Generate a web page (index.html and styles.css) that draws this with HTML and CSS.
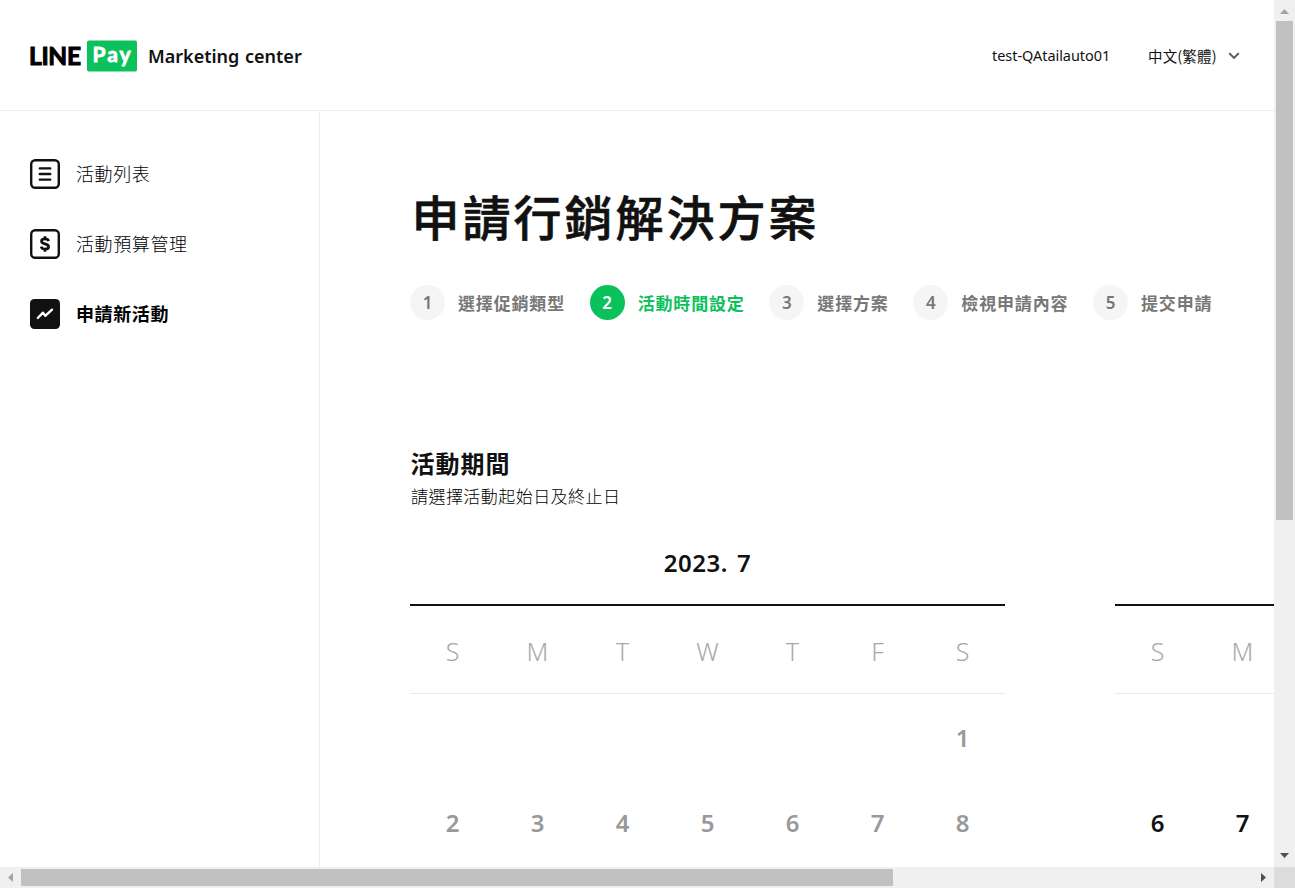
FILE: index.html
```html
<!DOCTYPE html>
<html lang="zh-Hant">
<head>
<meta charset="utf-8">
<title>LINE Pay Marketing center</title>
<link rel="stylesheet" href="styles.css">
</head>
<body>
<div class="window">
  <div class="viewport">
    <header class="header">
      <a class="brand">
        <svg class="logo" width="108" height="32" viewBox="0 0 108 32">
          <rect x="58" y="0.500" width="50" height="31" rx="2" fill="#0bc15c"/>
          <text class="logo-line" x="0" y="25" textLength="52" lengthAdjust="spacing">LINE</text>
          <text class="logo-pay" x="63.500" y="22" textLength="38" lengthAdjust="spacing">Pay</text>
        </svg>
        <span class="brand-name">Marketing center</span>
      </a>
      <div class="account">
        <span class="user">test-QAtailauto01</span>
        <span class="language">中文(繁體)</span>
        <svg class="chevron" width="12" height="8" viewBox="0 0 12 8"><path d="M1.200 1.200 6 6 10.800 1.200" fill="none" stroke="#555" stroke-width="1.900"/></svg>
      </div>
    </header>
    <div class="body">
      <nav class="sidebar">
        <a class="nav-item">
          <svg width="30" height="30" viewBox="0 0 30 30" fill="none" stroke="#111" stroke-width="2.400"><rect x="1.200" y="1.200" width="27.600" height="27.600" rx="4"/><path d="M9.800 9.400h10.400M9.800 15h10.400M9.800 20.600h10.400" stroke-linecap="round"/></svg>
          <span>活動列表</span>
        </a>
        <a class="nav-item">
          <svg width="30" height="30" viewBox="0 0 30 30" fill="none" stroke="#111" stroke-width="2.400"><rect x="1.200" y="1.200" width="27.600" height="27.600" rx="4"/><path d="M18.600 12.200C18.200 10.600 16.900 9.900 15 9.900c-2.100 0-3.500.9-3.500 2.400 0 1.700 1.600 2.200 3.500 2.600s3.600 1 3.600 2.800c0 1.600-1.500 2.500-3.600 2.500-2 0-3.400-.8-3.900-2.500M15 7.300v2.500M15 20.200v2.600" stroke-width="2.700"/></svg>
          <span>活動預算管理</span>
        </a>
        <a class="nav-item nav-item--active">
          <svg width="30" height="30" viewBox="0 0 30 30"><rect width="30" height="30" rx="4.500" fill="#111"/><path d="M7.800 19 13 13.600l2.300 3.300 6.700-6.300" fill="none" stroke="#fff" stroke-width="2.300" stroke-linecap="round" stroke-linejoin="round"/></svg>
          <span>申請新活動</span>
        </a>
      </nav>
      <main class="main">
        <h1 class="title">申請行銷解決方案</h1>
        <ol class="steps">
          <li class="step"><b>1</b><span>選擇促銷類型</span></li>
          <li class="step step--current"><b>2</b><span>活動時間設定</span></li>
          <li class="step"><b>3</b><span>選擇方案</span></li>
          <li class="step"><b>4</b><span>檢視申請內容</span></li>
          <li class="step"><b>5</b><span>提交申請</span></li>
        </ol>
        <h2 class="section-title">活動期間</h2>
        <p class="section-note">請選擇活動起始日及終止日</p>
        <div class="calendars">
          <section class="calendar">
            <h3 class="month">2023. 7</h3>
            <div class="weekdays"><span>S</span><span>M</span><span>T</span><span>W</span><span>T</span><span>F</span><span>S</span></div>
            <div class="days days--past">
              <span></span><span></span><span></span><span></span><span></span><span></span><span>1</span>
              <span>2</span><span>3</span><span>4</span><span>5</span><span>6</span><span>7</span><span>8</span>
            </div>
          </section>
          <section class="calendar">
            <h3 class="month"></h3>
            <div class="weekdays"><span>S</span><span>M</span></div>
            <div class="days">
              <span></span><span></span><span></span><span></span><span></span><span></span><span></span>
              <span>6</span><span>7</span>
            </div>
          </section>
        </div>
      </main>
    </div>
  </div>
  <div class="scroll scroll--y">
    <svg class="arrow" width="21" height="21" viewBox="0 0 21 21"><path d="M6 14h9L10.500 9z" fill="#a3a3a3"/></svg>
    <i class="thumb"></i>
    <svg class="arrow" width="21" height="21" viewBox="0 0 21 21"><path d="M6 7h9l-4.500 5z" fill="#505050"/></svg>
  </div>
  <div class="scroll scroll--x">
    <svg class="arrow" width="21" height="21" viewBox="0 0 21 21"><path d="M13 6v9l-5-4.500z" fill="#a3a3a3"/></svg>
    <i class="thumb"></i>
    <svg class="arrow" width="21" height="21" viewBox="0 0 21 21"><path d="M8 6v9l5-4.500z" fill="#505050"/></svg>
  </div>
  <div class="corner"></div>
</div>
</body>
</html>
```
FILE: styles.css
```css
* { box-sizing: border-box; }
body, h1, h2, h3, p, ol { margin: 0; padding: 0; }
body {
  overflow: hidden;
  background: #fff;
  color: #111;
  font-family: "Noto Sans", "Noto Sans CJK TC", sans-serif;
}
svg { display: block; flex: none; }
.window {
  display: grid;
  grid-template: 867px 21px / 1274px 21px;
  width: 1295px;
  height: 888px;
  overflow: hidden;
}
.viewport { display: flex; flex-direction: column; overflow: hidden; }

.header {
  display: flex;
  flex: none;
  align-items: center;
  justify-content: space-between;
  height: 111px;
  padding: 2px 34px 0 29px;
  border-bottom: 1px solid #eee;
}
.brand { display: flex; align-items: center; gap: 11px; }
.logo-line { font: 700 24.5px Lato, sans-serif; fill: #000; stroke: #000; stroke-width: 1; }
.logo-pay { font: 700 21px Lato, sans-serif; fill: #fff; stroke: #fff; stroke-width: 0.800; }
.brand-name { font-size: 18px; font-weight: 600; line-height: 28px; letter-spacing: 0; word-spacing: 1px; white-space: nowrap; }
.account { display: flex; align-items: center; font-size: 14px; line-height: 24px; white-space: nowrap; }
.user { width: 157px; padding-left: 1px; margin-top: -2px; font-size: 14.5px; letter-spacing: -0.050px; }
.language { width: 80px; font-family: "Noto Sans CJK TC", sans-serif; font-size: 14.5px; letter-spacing: 0.150px; }

.body { display: flex; flex: 1; min-height: 0; }
.sidebar {
  display: flex;
  flex: none;
  flex-direction: column;
  gap: 40px;
  width: 320px;
  padding: 48px 0 0 30px;
  border-right: 1px solid #eee;
}
.nav-item {
  display: flex;
  align-items: center;
  gap: 16px;
  height: 30px;
  color: #000;
  font: 300 18px/30px "Noto Sans CJK TC", sans-serif;
  letter-spacing: 0.600px;
}
.nav-item span { margin-top: -2px; }
.nav-item--active { font-weight: 700; }

.main { flex: none; padding: 64px 0 0 90px; }
.title {
  padding-left: 1.500px;
  font: 500 48px/80px "Noto Sans CJK TC", sans-serif;
  -webkit-text-stroke: 0.600px #111;
  letter-spacing: 3px;
}
.steps { display: flex; gap: 24.700px; margin-top: 30px; list-style: none; }
.step {
  display: flex;
  align-items: center;
  gap: 13px;
  color: #777;
  font: 700 17px/35px "Noto Sans CJK TC", sans-serif;
  letter-spacing: 0.830px;
}
.step b {
  width: 35px;
  height: 35px;
  border-radius: 50%;
  background: #f5f5f5;
  font: 600 17px/36px "Noto Sans", sans-serif;
  letter-spacing: 0;
  text-align: center;
}
.step--current { color: #0bc15c; }
.step--current b { background: #0bc15c; color: #fff; }

.section-title {
  margin-top: 123px;
  padding-left: 0.500px;
  font: 700 24px/40px "Noto Sans CJK TC", sans-serif;
  letter-spacing: 1px;
}
.section-note {
  padding-left: 1px;
  color: #000;
  font: 300 17px/26px "Noto Sans CJK TC", sans-serif;
  letter-spacing: 0.450px;
}
.calendars { display: flex; gap: 110px; }
.calendar { flex: none; width: 595px; }
.month {
  height: 95px;
  padding-top: 34px;
  font-size: 24px;
  font-weight: 600;
  line-height: 40px;
  letter-spacing: 0.500px;
  word-spacing: 2.500px;
  text-align: center;
}
.weekdays, .days { display: grid; grid-template-columns: repeat(7, 85px); text-align: center; }
.weekdays {
  height: 90px;
  border-top: 2px solid #111;
  border-bottom: 1px solid #eaeaea;
  color: #a8a8a8;
  font-size: 25px;
  font-weight: 300;
  line-height: 90px;
}
.days {
  grid-auto-rows: 85px;
  padding-top: 2px;
  font-size: 24px;
  font-weight: 600;
  line-height: 84px;
}
.days--past { color: #999; }

.scroll { display: flex; background: #f0f0f0; }
.thumb { display: block; background: #c1c1c1; }
.scroll--y { flex-direction: column; justify-content: flex-start; }
.scroll--y .thumb { width: 17px; height: 499px; margin: 0 2px; }
.scroll--y .arrow:last-child { margin-top: auto; }
.scroll--x .thumb { width: 872px; height: 17px; margin: 2px 0; }
.scroll--x .arrow:last-child { margin-left: auto; }
.corner { background: #dcdcdc; }
```
